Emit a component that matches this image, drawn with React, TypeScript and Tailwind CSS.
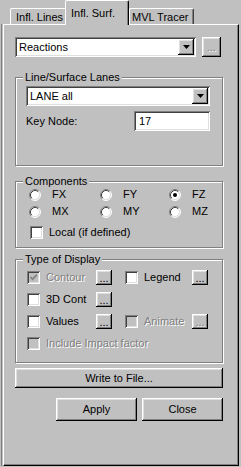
import React from 'react';

const raised =
  'bg-[#c0c0c0] shadow-[inset_-1px_-1px_0_#000,inset_1px_1px_0_#fff,inset_-2px_-2px_0_#808080,inset_2px_2px_0_#dfdfdf]';
const sunken =
  'shadow-[inset_1px_1px_0_#808080,inset_-1px_-1px_0_#fff,inset_2px_2px_0_#404040,inset_-2px_-2px_0_#dfdfdf]';
const grayText = 'text-[#808080] [text-shadow:1px_1px_0_#fff]';

const Arrow = () => (
  <svg width="7" height="4" viewBox="0 0 7 4">
    <path d="M0 0h7L3.5 4z" fill="#000" />
  </svg>
);

const Combo = ({ value }: { value: string }) => (
  <div className={`flex items-center h-[20px] bg-white p-[2px] ${sunken}`}>
    <span className="flex-1 pl-[2px] leading-none">{value}</span>
    <div className={`w-[16px] h-[16px] flex items-center justify-center ${raised}`}>
      <Arrow />
    </div>
  </div>
);

const Dots = ({ disabled, className = '' }: { disabled?: boolean; className?: string }) => (
  <div className={`flex items-center justify-center leading-none ${raised} ${className}`}>
    <span className={`mt-[1px] ${disabled ? grayText : ''}`}>...</span>
  </div>
);

const Radio = ({ checked }: { checked?: boolean }) => (
  <svg width="12" height="12" viewBox="0 0 12 12" className="shrink-0">
    <circle cx="6" cy="6" r="5" fill="#fff" />
    <path d="M2.11 9.89A5.5 5.5 0 0 1 9.89 2.11" stroke="#808080" fill="none" />
    <path d="M9.89 2.11A5.5 5.5 0 0 1 2.11 9.89" stroke="#fff" fill="none" />
    <path d="M2.82 9.18A4.5 4.5 0 0 1 9.18 2.82" stroke="#404040" fill="none" />
    <path d="M9.18 2.82A4.5 4.5 0 0 1 2.82 9.18" stroke="#dfdfdf" fill="none" />
    {checked && <circle cx="6" cy="6" r="2" fill="#000" />}
  </svg>
);

const Check = ({ checked, disabled }: { checked?: boolean; disabled?: boolean }) => (
  <div
    className={`w-[13px] h-[13px] shrink-0 flex items-center justify-center ${disabled ? 'bg-[#c0c0c0]' : 'bg-white'} ${sunken}`}
  >
    {checked && (
      <svg width="9" height="9" viewBox="0 0 9 9">
        <path d="M1.5 4l2 2.2L7.8 1.8" stroke={disabled ? '#808080' : '#000'} strokeWidth="1.7" fill="none" />
      </svg>
    )}
  </div>
);

const Group = ({
  label,
  className = '',
  children,
}: {
  label: string;
  className?: string;
  children: React.ReactNode;
}) => (
  <div className={`relative border border-[#808080] shadow-[inset_1px_1px_0_#fff,1px_1px_0_#fff] ${className}`}>
    <span className="absolute -top-[8px] left-[7px] bg-[#c0c0c0] px-[2px] leading-[14px]">{label}</span>
    {children}
  </div>
);

const RadioItem = ({ label, checked }: { label: string; checked?: boolean }) => (
  <div className="flex items-center h-[13px]">
    <Radio checked={checked} />
    <span className="ml-[11px] leading-none">{label}</span>
  </div>
);

const CheckItem = ({
  label,
  checked,
  disabled,
  width,
}: {
  label: string;
  checked?: boolean;
  disabled?: boolean;
  width: string;
}) => (
  <div className={`flex items-center ${width}`}>
    <Check checked={checked} disabled={disabled} />
    <span className={`ml-[6px] leading-none ${disabled ? grayText : ''}`}>{label}</span>
  </div>
);

export default function App() {
  return (
    <div className="w-[241px] h-[467px] bg-[#c0c0c0] flex flex-col text-[11px] text-black font-['Liberation_Sans',Arial,sans-serif] overflow-hidden">
      {/* Tabs */}
      <div className="flex items-end h-[24px] pl-[10px] shrink-0">
        <div className="w-[57px] h-[16px] border-l border-t border-white border-r border-r-[#404040] rounded-t-[2px] shadow-[inset_-1px_0_0_#808080] pl-[5px] pt-[2px] leading-[12px]">
          Infl. Lines
        </div>
        <div className="relative z-10 -ml-[2px] w-[64px] h-[25px] -mb-px bg-[#c0c0c0] border-l border-t border-white border-r border-r-[#000] rounded-t-[2px] shadow-[inset_-1px_0_0_#808080] pl-[5px] pt-[6px] leading-[12px]">
          Infl. Surf.
        </div>
        <div className="w-[65px] h-[16px] border-l border-t border-white border-r border-r-[#404040] rounded-t-[2px] shadow-[inset_-1px_0_0_#808080] pl-[2px] pt-[2px] leading-[12px]">
          MVL Tracer
        </div>
      </div>

      {/* Page */}
      <div className="flex-1 flex ml-px mb-px mr-[2px] border-l border-[#808080]">
        <div className="flex-1 ml-px border-l border-t border-white border-r border-b border-r-black border-b-black shadow-[inset_-1px_-1px_0_#808080] pl-[11px] pr-[15px] pt-[12px] flex flex-col">
          <div className="flex items-center">
            <div className="w-[181px]">
              <Combo value="Reactions" />
            </div>
            <Dots disabled className="ml-[6px] w-[19px] h-[20px]" />
          </div>

          <Group label="Line/Surface Lanes" className="mt-[20px] h-[89px] pt-[8px] pl-[10px] pr-[12px]">
            <Combo value="LANE all" />
            <div className="flex items-center mt-[5px]">
              <span className="flex-1 leading-none">Key Node:</span>
              <div className={`w-[76px] h-[20px] bg-white flex items-center pl-[5px] leading-none ${sunken}`}>17</div>
            </div>
          </Group>

          <Group label="Components" className="mt-[15px] h-[67px] pt-[6px] pl-[13px]">
            <div className="grid grid-cols-[71px_69px_1fr] gap-y-[4px]">
              <RadioItem label="FX" />
              <RadioItem label="FY" />
              <RadioItem label="FZ" checked />
              <RadioItem label="MX" />
              <RadioItem label="MY" />
              <RadioItem label="MZ" />
            </div>
            <div className="flex items-center mt-[8px] ml-[1px]">
              <Check />
              <span className="ml-[6px] leading-none">Local (if defined)</span>
            </div>
          </Group>

          <Group label="Type of Display" className="mt-[11px] h-[104px] pt-[10px] pl-[11px]">
            <div className="flex flex-col gap-[7px]">
              <div className="flex items-center h-[15px]">
                <CheckItem label="Contour" checked disabled width="w-[69px]" />
                <Dots className="w-[16px] h-[15px]" />
                <div className="w-[13px]" />
                <CheckItem label="Legend" width="w-[67px]" />
                <Dots className="w-[16px] h-[15px]" />
              </div>
              <div className="flex items-center h-[15px]">
                <CheckItem label="3D Cont" width="w-[69px]" />
                <Dots className="w-[16px] h-[15px]" />
              </div>
              <div className="flex items-center h-[15px]">
                <CheckItem label="Values" width="w-[69px]" />
                <Dots className="w-[16px] h-[15px]" />
                <div className="w-[13px]" />
                <CheckItem label="Animate" disabled width="w-[67px]" />
                <Dots disabled className="w-[16px] h-[15px]" />
              </div>
              <div className="flex items-center h-[15px]">
                <CheckItem label="Include Impact factor" disabled width="w-[150px]" />
              </div>
            </div>
          </Group>

          <button className={`mt-[5px] h-[20px] leading-none ${raised}`}>Write to File...</button>

          <div className="flex justify-end gap-[5px] mt-[10px]">
            <button className={`w-[81px] h-[23px] leading-none ${raised}`}>Apply</button>
            <button className={`w-[81px] h-[23px] leading-none ${raised}`}>Close</button>
          </div>
        </div>
      </div>
    </div>
  );
}
